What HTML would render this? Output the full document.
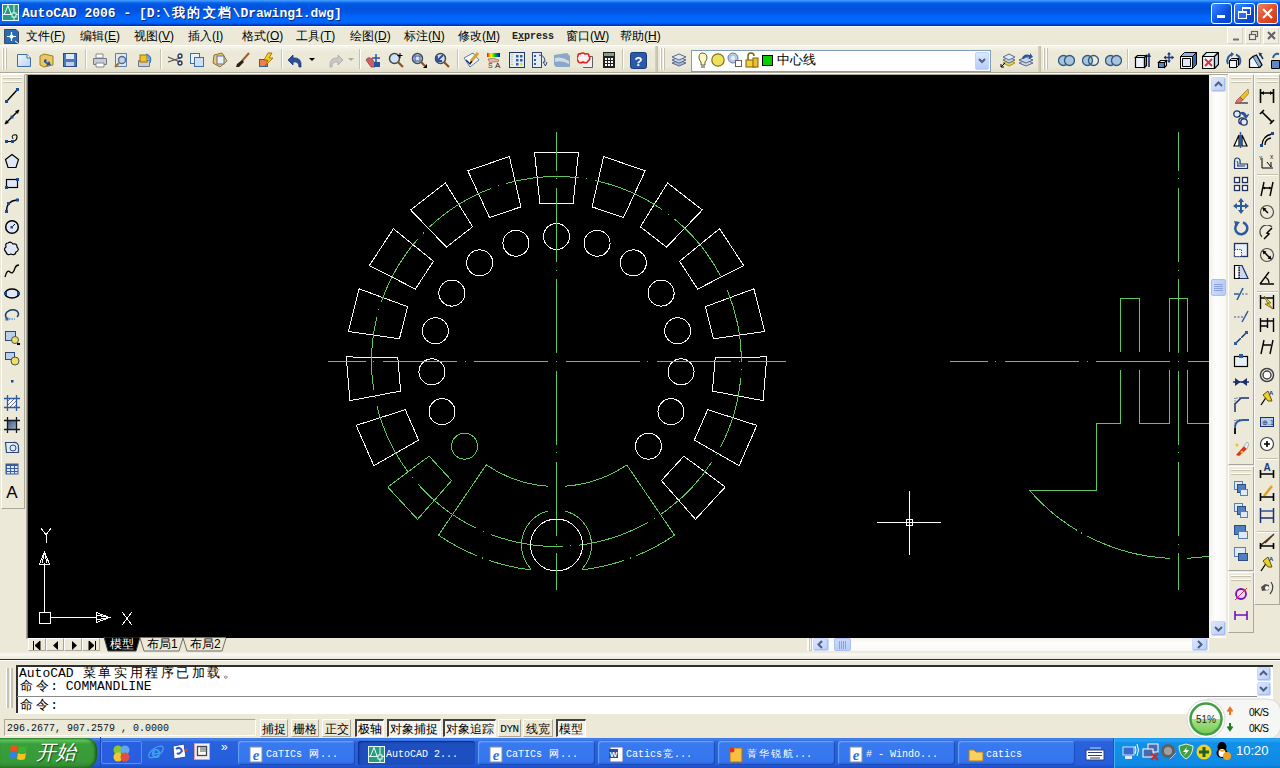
<!DOCTYPE html>
<html><head><meta charset="utf-8">
<style>
*{margin:0;padding:0;box-sizing:border-box}
html,body{width:1280px;height:768px;overflow:hidden;background:#ece9d8;font-family:"Liberation Sans",sans-serif;font-size:12px;color:#000}
.a{position:absolute}
#title{left:0;top:0;width:1280px;height:26px;background:linear-gradient(#3d95ff 0,#3d95ff 1px,#1472f2 2px,#0058e4 4px,#0052dc 9px,#0058e8 13px,#0066fc 17px,#0068ff 22px,#0054e0 24px,#0030b0 25px,#0030b0 26px)}
#ttext{left:22px;top:4px;font:bold 13px "Liberation Mono",monospace;color:#fff;text-shadow:1px 1px 0 #0a2a7a;white-space:pre}
.tb{top:3px;width:21px;height:21px;border:1px solid #fff;border-radius:3px;background:linear-gradient(135deg,#3c8cff,#0a4ee0 60%,#0840c8)}
#menubar{left:0;top:26px;width:1280px;height:20px;background:#ece9d8}
.mi{top:28px;font-size:12px;white-space:pre}
#toolbar{left:0;top:46px;width:1280px;height:28px;background:linear-gradient(#f8f7f0,#ece9d8 5px,#ece9d8 22px,#d8d4c0)}
#draw{left:27px;top:75px;width:1182px;height:563px;background:#000}
.grip{width:3px;border-left:1px solid #fff;border-right:1px solid #aca899}
.sep{width:2px;border-left:1px solid #aca899;border-right:1px solid #fff}
.btn{border:1px solid #fff;border-right-color:#716f64;border-bottom-color:#716f64}
.t{position:absolute;white-space:pre;line-height:14px}
.sb{background:linear-gradient(#e0e8fe,#bcd0f8);border:1px solid #b4c8f6;border-radius:2px}
</style></head><body>
<!-- title bar -->
<div id="title" class="a"></div>
<svg class="a" style="left:2px;top:4px" width="17" height="17"><rect x="0.5" y="0.5" width="16" height="16" fill="#2a9a82" stroke="#e8fff8"/><path d="M2.5 10 L6 1.5 L9 10 M12 1 V16 M1 10.5 H16" stroke="#e8fff8" stroke-width="1" fill="none"/><rect x="10" y="9" width="4" height="4" fill="#2a9a82" stroke="#e8fff8"/></svg>
<div id="ttext" class="a">AutoCAD 2006 - [D:\<span style="display:inline-block;width:15.60px;text-align:center">我</span><span style="display:inline-block;width:15.60px;text-align:center">的</span><span style="display:inline-block;width:15.60px;text-align:center">文</span><span style="display:inline-block;width:15.60px;text-align:center">档</span>\Drawing1.dwg]</div>
<div class="a tb" style="left:1211px"><div class="a" style="left:5px;top:11px;width:8px;height:3px;background:#fff"></div></div>
<div class="a tb" style="left:1234px"><div class="a" style="left:7px;top:3px;width:9px;height:8px;border:1px solid #fff;border-top-width:2px"></div><div class="a" style="left:3px;top:7px;width:9px;height:8px;border:1px solid #fff;border-top-width:2px;background:#2a6ef0"></div></div>
<div class="a tb" style="left:1257px;background:linear-gradient(135deg,#f08060,#e0502a 50%,#c83810)"><svg class="a" style="left:3px;top:3px" width="13" height="13"><path d="M2 2 L11 11 M11 2 L2 11" stroke="#fff" stroke-width="2.2"/></svg></div>
<!-- menu bar -->
<div id="menubar" class="a"></div>
<div class="a" style="left:0;top:26px;width:1280px;height:1px;background:#fff"></div>
<div class="a" style="left:0;top:45px;width:1280px;height:1px;background:#fff"></div>
<div class="a mi" style="left:26px">文件(<u>F</u>)</div>
<div class="a mi" style="left:80px">编辑(<u>E</u>)</div>
<div class="a mi" style="left:134px">视图(<u>V</u>)</div>
<div class="a mi" style="left:188px">插入(<u>I</u>)</div>
<div class="a mi" style="left:242px">格式(<u>O</u>)</div>
<div class="a mi" style="left:296px">工具(<u>T</u>)</div>
<div class="a mi" style="left:350px">绘图(<u>D</u>)</div>
<div class="a mi" style="left:404px">标注(<u>N</u>)</div>
<div class="a mi" style="left:458px">修改(<u>M</u>)</div>
<div class="a mi" style="left:566px">窗口(<u>W</u>)</div>
<div class="a mi" style="left:620px">帮助(<u>H</u>)</div>
<div class="a mi" style="left:512px;top:31px;font-family:'Liberation Mono',monospace;font-size:10px;font-weight:bold;color:#202020">E<u>x</u>press</div>
<!-- toolbar row -->
<div id="draw" class="a"></div>
<svg width="1280" height="768" style="position:absolute;left:0;top:0"><defs><clipPath id="dc"><rect x="27" y="75" width="1182" height="563"/></clipPath></defs><g clip-path="url(#dc)" shape-rendering="crispEdges"><path d="M534.52 152.35 L578.48 152.35 L573.09 203.67 L539.91 203.67 Z" fill="none" stroke="#f8f8f8" stroke-width="1"/><path d="M603.62 156.55 L645.2 170.82 L623.44 217.61 L592.06 206.83 Z" fill="none" stroke="#f8f8f8" stroke-width="1"/><path d="M667.61 182.95 L702.31 209.95 L666.53 247.14 L640.35 226.76 Z" fill="none" stroke="#f8f8f8" stroke-width="1"/><path d="M719.57 228.7 L743.61 265.51 L697.7 289.06 L679.56 261.29 Z" fill="none" stroke="#f8f8f8" stroke-width="1"/><path d="M753.85 288.85 L764.64 331.47 L713.57 338.84 L705.43 306.67 Z" fill="none" stroke="#f8f8f8" stroke-width="1"/><path d="M766.75 356.86 L763.12 400.68 L712.42 391.07 L715.16 358 Z" fill="none" stroke="#f8f8f8" stroke-width="1"/><path d="M756.86 425.38 L739.2 465.64 L694.37 440.09 L707.7 409.71 Z" fill="none" stroke="#f8f8f8" stroke-width="1"/><path d="M725.26 486.98 L695.49 519.32 L661.38 480.6 L683.85 456.19 Z" fill="none" stroke="#f8f8f8" stroke-width="1"/><path d="M417.51 519.32 L387.74 486.98 L429.15 456.19 L451.62 480.6 Z" fill="none" stroke="#5ec85e" stroke-width="1"/><path d="M373.8 465.64 L356.14 425.38 L405.3 409.71 L418.63 440.09 Z" fill="none" stroke="#f8f8f8" stroke-width="1"/><path d="M349.88 400.68 L346.25 356.86 L397.84 358 L400.58 391.07 Z" fill="none" stroke="#f8f8f8" stroke-width="1"/><path d="M348.36 331.47 L359.15 288.85 L407.57 306.67 L399.43 338.84 Z" fill="none" stroke="#f8f8f8" stroke-width="1"/><path d="M369.39 265.51 L393.43 228.7 L433.44 261.29 L415.3 289.06 Z" fill="none" stroke="#f8f8f8" stroke-width="1"/><path d="M410.69 209.95 L445.39 182.95 L472.65 226.76 L446.47 247.14 Z" fill="none" stroke="#f8f8f8" stroke-width="1"/><path d="M467.8 170.82 L509.38 156.55 L520.94 206.83 L489.56 217.61 Z" fill="none" stroke="#f8f8f8" stroke-width="1"/><circle cx="556.5" cy="236.5" r="13" fill="none" stroke="#f8f8f8" stroke-width="1"/><circle cx="597.09" cy="243.27" r="13" fill="none" stroke="#f8f8f8" stroke-width="1"/><circle cx="633.28" cy="262.86" r="13" fill="none" stroke="#f8f8f8" stroke-width="1"/><circle cx="661.15" cy="293.13" r="13" fill="none" stroke="#f8f8f8" stroke-width="1"/><circle cx="677.68" cy="330.81" r="13" fill="none" stroke="#f8f8f8" stroke-width="1"/><circle cx="681.07" cy="371.82" r="13" fill="none" stroke="#f8f8f8" stroke-width="1"/><circle cx="670.97" cy="411.71" r="13" fill="none" stroke="#f8f8f8" stroke-width="1"/><circle cx="648.47" cy="446.16" r="13" fill="none" stroke="#f8f8f8" stroke-width="1"/><circle cx="464.53" cy="446.16" r="13" fill="none" stroke="#5ec85e" stroke-width="1"/><circle cx="442.03" cy="411.71" r="13" fill="none" stroke="#f8f8f8" stroke-width="1"/><circle cx="431.93" cy="371.82" r="13" fill="none" stroke="#f8f8f8" stroke-width="1"/><circle cx="435.32" cy="330.81" r="13" fill="none" stroke="#f8f8f8" stroke-width="1"/><circle cx="451.85" cy="293.13" r="13" fill="none" stroke="#f8f8f8" stroke-width="1"/><circle cx="479.72" cy="262.86" r="13" fill="none" stroke="#f8f8f8" stroke-width="1"/><circle cx="515.91" cy="243.27" r="13" fill="none" stroke="#f8f8f8" stroke-width="1"/><circle cx="556.5" cy="361.5" r="185" fill="none" stroke="#5ec85e" stroke-width="1" stroke-dasharray="73.21 7.5 1.2 7.5" stroke-dashoffset="73.34"/><path d="M328 361.5 H365.6 M382.9 361.5 H456.9 M373 361.5 H374 M474.2 361.5 H548.2 M465 361.5 H466 M565.5 361.5 H639.5 M556 361.5 H557 M656.8 361.5 H730.8 M647 361.5 H648 M748.1 361.5 H786 M739 361.5 H740" stroke="#5ec85e" stroke-width="1" fill="none"/><path d="M556.5 132 V170.6 M556.5 187.9 V261.9 M556.5 178 V179 M556.5 279.2 V353.2 M556.5 270 V271 M556.5 370.5 V444.5 M556.5 361 V362 M556.5 461.8 V535.8 M556.5 452 V453 M556.5 553.1 V590 M556.5 544 V545" stroke="#5ec85e" stroke-width="1" fill="none"/><path d="M486.24 464.89 L438.46 535.19 M626.76 464.89 L674.54 535.19" stroke="#5ec85e" stroke-width="1" fill="none"/><path d="M486.24 464.89 A125 125 0 0 0 547.56 486.18 M565.44 486.18 A125 125 0 0 0 626.76 464.89" stroke="#5ec85e" stroke-width="1" fill="none"/><path d="M438.46 535.19 A210 210 0 0 0 476.48 555.65 M481.59 557.68 A210 210 0 0 0 483.3 558.33 M488.82 560.3 A210 210 0 0 0 530.54 569.89 M674.54 535.19 A210 210 0 0 1 636.52 555.65 M631.41 557.68 A210 210 0 0 1 629.7 558.33 M624.18 560.3 A210 210 0 0 1 582.46 569.89" stroke="#5ec85e" stroke-width="1" fill="none"/><circle cx="556.5" cy="545" r="26" fill="none" stroke="#f8f8f8" stroke-width="1"/><path d="M547.5 511.18 A35 35 0 0 0 531.07 569.05 M565.5 511.18 A35 35 0 0 1 581.93 569.05" stroke="#5ec85e" stroke-width="1" fill="none"/><path d="M950 361.5 H987.6 M1004.9 361.5 H1078.9 M995 361.5 H996 M1096.2 361.5 H1170.2 M1087 361.5 H1088 M1187.5 361.5 H1209 M1178 361.5 H1179" stroke="#5ec85e" stroke-width="1" fill="none"/><path d="M1178.5 132 V170.6 M1178.5 187.9 V261.9 M1178.5 178 V179 M1178.5 279.2 V353.2 M1178.5 270 V271 M1178.5 370.5 V444.5 M1178.5 361 V362 M1178.5 461.8 V535.8 M1178.5 452 V453 M1178.5 553.1 V590 M1178.5 544 V545" stroke="#5ec85e" stroke-width="1" fill="none"/><path d="M1120.5 352 V298.5 H1139.5 V352 M1120.5 370 V423.5 H1096.5 V490.5 H1029.5 M1139.5 370 V423.5 H1169.5 V370 M1169.5 352 V298.5 H1187.5 V352 M1187.5 370 V423.5 H1209" stroke="#5ec85e" stroke-width="1" fill="none"/><path d="M1029.56 490.45 A197 197 0 0 0 1077.04 530.36 M1081.19 532.79 A197 197 0 0 0 1082.39 533.47 M1087.23 536.08 A197 197 0 0 0 1169.56 558.3 M1177.81 558.5 A197 197 0 0 0 1179.19 558.5 M1187.44 558.3 A197 197 0 0 0 1212.71 555.51" stroke="#5ec85e" stroke-width="1" fill="none"/><path d="M877 522.5 H941 M909.5 491 V555" stroke="#fff" stroke-width="1"/><rect x="906.5" y="519.5" width="6" height="6" fill="none" stroke="#fff" stroke-width="1"/><path d="M44.5 612 V563 M50.5 617.5 H96" stroke="#fff" stroke-width="1" fill="none"/><rect x="39.5" y="612.5" width="11" height="11" fill="none" stroke="#fff" stroke-width="1"/><path d="M44.5 552 L39.5 564 H49.5 Z M42 563 L44.5 553 L47 563" stroke="#fff" stroke-width="1" fill="none"/><path d="M96.5 612.5 L109.5 617.5 L96.5 622.5 Z M97 615 L108 617.5 L97 620" stroke="#fff" stroke-width="1" fill="none"/><path d="M41 528 L46 535 L51 528 M46 535 V543" stroke="#fff" stroke-width="1" fill="none"/><path d="M122 612 L132 625 M132 612 L122 625" stroke="#fff" stroke-width="1" fill="none"/></g></svg>
<svg class="a" style="left:3px;top:28px" width="17" height="17" viewBox="0 0 17 17"><path d="M1.5 1.5 H13 L15.5 4 V15.5 H1.5 Z" fill="#2a6ab0" stroke="#3a4a60"/><path d="M4 8.5 H13 M8.5 4 V13" stroke="#fff" stroke-width="1.2"/><circle cx="8.5" cy="8.5" r="2" fill="#fff"/><path d="M12 13 L15.5 15.5" stroke="#fff"/></svg>
<div class="a" style="left:1227px;top:27px;width:16px;height:17px;border:1px solid #fff;border-right-color:#d8d4c4;border-bottom-color:#d8d4c4;background:#efede2"></div>
<div class="a" style="left:1245px;top:27px;width:16px;height:17px;border:1px solid #fff;border-right-color:#d8d4c4;border-bottom-color:#d8d4c4;background:#efede2"></div>
<div class="a" style="left:1263px;top:27px;width:16px;height:17px;border:1px solid #fff;border-right-color:#d8d4c4;border-bottom-color:#d8d4c4;background:#efede2"></div>
<svg class="a" style="left:1230px;top:30px" width="11" height="11" viewBox="0 0 11 11"><path d="M3 9.5 H9" stroke="#707070" stroke-width="2"/></svg>
<svg class="a" style="left:1248px;top:30px" width="11" height="11" viewBox="0 0 11 11"><rect x="3.5" y="1.5" width="6" height="5" fill="none" stroke="#606060" stroke-width="1.2"/><rect x="1.5" y="4.5" width="6" height="5" fill="#efede2" stroke="#606060" stroke-width="1.2"/></svg>
<svg class="a" style="left:1266px;top:30px" width="11" height="11" viewBox="0 0 11 11"><path d="M2 2 L9 9 M9 2 L2 9" stroke="#606060" stroke-width="2"/></svg>
<div class="a" style="left:0px;top:46px;width:1280px;height:26px;background:linear-gradient(#f6f5ef,#ece9d8 6px,#ece9d8 20px,#e2dfcc)"></div>
<div class="a" style="left:0px;top:72px;width:1280px;height:1px;background:#aca899"></div>
<div class="a" style="left:0px;top:73px;width:1280px;height:1px;background:#fff"></div>
<div class="a" style="left:2px;top:48px;width:2px;height:22px;border-left:1px solid #fff;background:#c5c2b2"></div>
<div class="a" style="left:5px;top:48px;width:2px;height:22px;border-left:1px solid #fff;background:#c5c2b2"></div>
<div class="a" style="left:85px;top:49px;width:1px;height:20px;background:#c5c2b2"></div>
<div class="a" style="left:86px;top:49px;width:1px;height:20px;background:#fff"></div>
<div class="a" style="left:160px;top:49px;width:1px;height:20px;background:#c5c2b2"></div>
<div class="a" style="left:161px;top:49px;width:1px;height:20px;background:#fff"></div>
<div class="a" style="left:281px;top:49px;width:1px;height:20px;background:#c5c2b2"></div>
<div class="a" style="left:282px;top:49px;width:1px;height:20px;background:#fff"></div>
<div class="a" style="left:359px;top:49px;width:1px;height:20px;background:#c5c2b2"></div>
<div class="a" style="left:360px;top:49px;width:1px;height:20px;background:#fff"></div>
<div class="a" style="left:457px;top:49px;width:1px;height:20px;background:#c5c2b2"></div>
<div class="a" style="left:458px;top:49px;width:1px;height:20px;background:#fff"></div>
<div class="a" style="left:622px;top:49px;width:1px;height:20px;background:#c5c2b2"></div>
<div class="a" style="left:623px;top:49px;width:1px;height:20px;background:#fff"></div>
<div class="a" style="left:655px;top:46px;width:3px;height:26px;background:linear-gradient(90deg,#d8d4c0,#c0bca8)"></div>
<div class="a" style="left:660px;top:48px;width:2px;height:22px;border-left:1px solid #fff;background:#c5c2b2"></div>
<div class="a" style="left:663px;top:48px;width:2px;height:22px;border-left:1px solid #fff;background:#c5c2b2"></div>
<div class="a" style="left:1038px;top:46px;width:3px;height:26px;background:linear-gradient(90deg,#d8d4c0,#c0bca8)"></div>
<div class="a" style="left:1043px;top:48px;width:2px;height:22px;border-left:1px solid #fff;background:#c5c2b2"></div>
<div class="a" style="left:1046px;top:48px;width:2px;height:22px;border-left:1px solid #fff;background:#c5c2b2"></div>
<div class="a" style="left:1127px;top:49px;width:1px;height:20px;background:#c5c2b2"></div>
<div class="a" style="left:1128px;top:49px;width:1px;height:20px;background:#fff"></div>
<div class="a" style="left:691px;top:50px;width:300px;height:22px;background:#fff;border:1px solid #7f9db9"></div>
<div class="a" style="left:975px;top:52px;width:14px;height:18px;background:linear-gradient(#dde8fe,#b6cbf7);border:1px solid #c1d3fb;border-radius:2px"></div>
<svg class="a" style="left:977px;top:56px" width="10" height="10" viewBox="0 0 10 10"><path d="M2 3 L5 6 L8 3" stroke="#4d6185" stroke-width="2" fill="none"/></svg>
<div class="a t" style="left:777px;top:53px;font-size:13px">中心线</div>
<svg width="0" height="0" style="position:absolute"><defs><linearGradient id="gpage" x1="0" y1="0" x2="1" y2="1"><stop offset="0" stop-color="#f4f8fe"/><stop offset="1" stop-color="#b8d0ec"/></linearGradient><linearGradient id="grain" x1="0" x2="1"><stop offset="0" stop-color="#f00"/><stop offset=".3" stop-color="#ff0"/><stop offset=".6" stop-color="#0c0"/><stop offset="1" stop-color="#00f"/></linearGradient></defs></svg>
<svg class="a" style="left:16px;top:52px" width="17" height="17" viewBox="0 0 17 17"><path d="M1.5 2.5 H11 L14.5 6 V14.5 H1.5 Z" fill="url(#gpage)" stroke="#3d6ea8"/><path d="M11 2.5 V6 H14.5" fill="#fff" stroke="#3d6ea8"/></svg>
<svg class="a" style="left:39px;top:52px" width="17" height="17" viewBox="0 0 17 17"><path d="M1 4 L5 2 L14 4 V13 L5 15 L1 13 Z" fill="#e8c860" stroke="#a08020"/><path d="M6 7 Q3 10 8 12 L7 14 L12 13 L10 9 L9 10.5 Q6 10 8 8" fill="#2850a0"/></svg>
<svg class="a" style="left:62px;top:52px" width="17" height="17" viewBox="0 0 17 17"><rect x="1.5" y="1.5" width="13" height="13" fill="#4a78c0" stroke="#2a4a88"/><rect x="4" y="2" width="8" height="5" fill="#dfe8f8"/><rect x="4" y="10" width="8" height="4" fill="#c0d0e8"/></svg>
<svg class="a" style="left:92px;top:52px" width="17" height="17" viewBox="0 0 17 17"><path d="M4 2 H11 V6 H4 Z" fill="#fff" stroke="#888"/><path d="M1.5 6.5 H14.5 V12.5 H1.5 Z" fill="#c8ccd8" stroke="#707888"/><path d="M4 11 H12 V15 H4 Z" fill="#fff" stroke="#888"/></svg>
<svg class="a" style="left:114px;top:52px" width="17" height="17" viewBox="0 0 17 17"><path d="M1.5 1.5 H12.5 V14.5 H1.5 Z" fill="#dfeaf8" stroke="#5a7eb0"/><circle cx="8" cy="8" r="3.5" fill="#bcd6f0" stroke="#606878" stroke-width="1.3"/><path d="M5 11 L1 15" stroke="#a07030" stroke-width="2"/></svg>
<svg class="a" style="left:137px;top:52px" width="17" height="17" viewBox="0 0 17 17"><path d="M1.5 8.5 H12.5 V14.5 H1.5 Z" fill="#c8ccd8" stroke="#707888"/><rect x="3" y="3" width="7" height="7" fill="#f0c030" stroke="#a07000"/><path d="M9 2 Q16 4 13 11" fill="#5aa0e0" stroke="#3070b0"/></svg>
<svg class="a" style="left:167px;top:52px" width="17" height="17" viewBox="0 0 17 17"><path d="M1 5 L13 10 M1 10 L13 6" stroke="#555" stroke-width="1.3"/><circle cx="13" cy="4" r="2" fill="none" stroke="#203060" stroke-width="1.3"/><circle cx="13" cy="11" r="2" fill="none" stroke="#203060" stroke-width="1.3"/></svg>
<svg class="a" style="left:189px;top:52px" width="17" height="17" viewBox="0 0 17 17"><rect x="1.5" y="1.5" width="9" height="10" fill="#eaf2fc" stroke="#3d6ea8"/><rect x="5.5" y="5.5" width="9" height="9" fill="#cfe0f6" stroke="#3d6ea8"/></svg>
<svg class="a" style="left:212px;top:52px" width="17" height="17" viewBox="0 0 17 17"><path d="M2 3 L10 1 L15 9 L8 15 L1 11 Z" fill="#e8c870" stroke="#907030"/><rect x="5" y="4" width="7" height="8" fill="#e8f0fa" stroke="#607090"/></svg>
<svg class="a" style="left:235px;top:52px" width="17" height="17" viewBox="0 0 17 17"><path d="M14 1 L7 9" stroke="#a06030" stroke-width="2"/><path d="M7 8 L9 10 L4 15 L1 15 L2 12 Z" fill="#302010"/></svg>
<svg class="a" style="left:258px;top:52px" width="17" height="17" viewBox="0 0 17 17"><rect x="1.5" y="7.5" width="8" height="7" fill="#f08050" stroke="#3060a0"/><path d="M10 1 L6 8 H10 L7 14 L15 6 H11 L14 1 Z" fill="#f8d020" stroke="#906000" stroke-width="0.8"/></svg>
<svg class="a" style="left:287px;top:52px" width="17" height="17" viewBox="0 0 17 17"><path d="M14 15 Q15 5 6 6 L6 3 L1 8 L6 13 L6 10 Q12 9 12 15 Z" fill="#2a50a0" stroke="#1a3070" stroke-width="0.8"/></svg>
<svg class="a" style="left:328px;top:52px" width="17" height="17" viewBox="0 0 17 17"><path d="M2 15 Q1 5 10 6 L10 3 L15 8 L10 13 L10 10 Q4 9 4 15 Z" fill="#c8c8c8" stroke="#a8a8a8" stroke-width="0.8"/></svg>
<svg class="a" style="left:365px;top:52px" width="17" height="17" viewBox="0 0 17 17"><path d="M1 8 Q3 4 7 7 L10 11 L10 15 L6 15 Z" fill="#d06060" stroke="#904040" stroke-width="0.8"/><path d="M11 2 V10 M7 6 H15" stroke="#2a50a0" stroke-width="1.5"/><rect x="9" y="10" width="6" height="5" fill="#2a50a0"/></svg>
<svg class="a" style="left:388px;top:52px" width="17" height="17" viewBox="0 0 17 17"><circle cx="6.5" cy="6.5" r="5" fill="#cfe2f6" stroke="#404850" stroke-width="1.5"/><path d="M10 10 L15 15" stroke="#905020" stroke-width="2.2"/><path d="M12 1 V6 M9.5 3.5 H14.5" stroke="#000" stroke-width="1"/></svg>
<svg class="a" style="left:411px;top:52px" width="17" height="17" viewBox="0 0 17 17"><circle cx="6.5" cy="6.5" r="5" fill="#cfe2f6" stroke="#404850" stroke-width="1.5"/><rect x="4" y="4" width="5" height="5" fill="none" stroke="#2a50a0"/><path d="M10 10 L14 14" stroke="#905020" stroke-width="2.2"/><path d="M16 12 V16 H12 Z" fill="#000"/></svg>
<svg class="a" style="left:434px;top:52px" width="17" height="17" viewBox="0 0 17 17"><circle cx="6.5" cy="6.5" r="5" fill="#cfe2f6" stroke="#404850" stroke-width="1.5"/><path d="M10 10 L15 15" stroke="#905020" stroke-width="2.2"/><path d="M3 9 L9 3 M3 4 V9 H8" stroke="#2a50a0" stroke-width="1.8" fill="none"/></svg>
<svg class="a" style="left:463px;top:52px" width="17" height="17" viewBox="0 0 17 17"><path d="M1 6 L7 15 L16 8 L10 1 Z" fill="#f4f8fc" stroke="#5a7eb0"/><path d="M3 8 L7 12 L11 6" stroke="#203060" stroke-width="1.4" fill="none"/><path d="M15 1 L8 9" stroke="#e0a020" stroke-width="2.8"/><path d="M8 9 L6.5 11.5 L9.5 10 Z" fill="#000"/></svg>
<svg class="a" style="left:486px;top:52px" width="17" height="17" viewBox="0 0 17 17"><rect x="1" y="1" width="13" height="4" fill="url(#grain)"/><path d="M2 7 Q7 5 13 8 L12 10 Q7 9 4 11 Z" fill="#f0b0a0" stroke="#806050" stroke-width="0.6"/><text x="2" y="16" font-size="7" font-family="Liberation Sans" fill="#404040">S</text><text x="9" y="16" font-size="8" font-family="Liberation Sans" fill="#202020">A</text></svg>
<svg class="a" style="left:509px;top:52px" width="17" height="17" viewBox="0 0 17 17"><rect x="0.5" y="0.5" width="15" height="15" fill="#e4ecf8" stroke="#203868"/><g fill="#3a5c98"><rect x="7" y="3" width="2.5" height="2.5"/><rect x="11" y="3" width="2.5" height="2.5"/><rect x="7" y="7" width="2.5" height="2.5"/><rect x="11" y="7" width="2.5" height="2.5"/><rect x="7" y="11" width="2.5" height="2.5"/></g><rect x="11" y="11" width="2.5" height="2.5" fill="#e0e040"/><path d="M3 2 V14" stroke="#a0a020" stroke-dasharray="1 1.5"/></svg>
<svg class="a" style="left:531px;top:52px" width="17" height="17" viewBox="0 0 17 17"><rect x="1.5" y="0.5" width="9" height="15" fill="#e4ecf8" stroke="#304878"/><g fill="#3a5c98"><rect x="3" y="3" width="2" height="2"/><rect x="3" y="7" width="2" height="2"/><rect x="3" y="11" width="2" height="2"/></g><path d="M8 3 Q14 3 14 10 L12 10 L14.5 14 L16 10" fill="none" stroke="#304878"/></svg>
<svg class="a" style="left:554px;top:52px" width="17" height="17" viewBox="0 0 17 17"><path d="M0 3 L13 1 L16 4 V15 L2 15 L0 13 Z" fill="#8aa8c8"/><path d="M1 6 Q8 4 15 9 L15 12 Q8 8 1 10 Z" fill="#d0dce8"/></svg>
<svg class="a" style="left:577px;top:52px" width="17" height="17" viewBox="0 0 17 17"><path d="M6 4.5 H15.5 V15.5 H6" fill="#f0f0f0" stroke="#606060"/><path d="M3 2 Q6 0 8 2 Q12 1 12 4 Q14 7 11 9 Q10 12 6 10 Q2 12 1 9 Q-1 6 1 4 Q1 1 3 2 Z" fill="#fff0f0" stroke="#e02020" stroke-width="1.6"/></svg>
<svg class="a" style="left:601px;top:52px" width="17" height="17" viewBox="0 0 17 17"><rect x="2" y="0" width="12" height="16" fill="#202020"/><rect x="3" y="1" width="10" height="3" fill="#80a080"/><g fill="#fff"><rect x="4" y="6" width="2" height="2"/><rect x="7" y="6" width="2" height="2"/><rect x="10" y="6" width="2" height="2"/><rect x="4" y="9" width="2" height="2"/><rect x="7" y="9" width="2" height="2"/><rect x="10" y="9" width="2" height="2"/><rect x="4" y="12" width="2" height="2"/><rect x="7" y="12" width="2" height="2"/><rect x="10" y="12" width="2" height="2"/></g></svg>
<svg class="a" style="left:630px;top:52px" width="17" height="17" viewBox="0 0 17 17"><rect x="0.5" y="0.5" width="16" height="16" rx="2" fill="#2a5aa8" stroke="#1a3a78"/><text x="8.5" y="13.5" font-family="Liberation Sans" font-weight="bold" font-size="13" fill="#fff" text-anchor="middle">?</text></svg>
<svg class="a" style="left:671px;top:52px" width="17" height="17" viewBox="0 0 17 17"><path d="M1 11 L8 14 L15 11 L8 8 Z" fill="#a8b8d0" stroke="#5a6a88"/><path d="M1 8 L8 11 L15 8 L8 5 Z" fill="#c8d4e8" stroke="#5a6a88"/><path d="M1 5 L8 8 L15 5 L8 2 Z" fill="#e0e8f4" stroke="#5a6a88"/></svg>
<svg class="a" style="left:1000px;top:52px" width="17" height="17" viewBox="0 0 17 17"><path d="M3 11 L9 14 L15 11 L9 8 Z" fill="#f0d040" stroke="#a09020"/><path d="M3 8 L9 11 L15 8 L9 5 Z" fill="#c8d4e8" stroke="#5a6a88"/><path d="M3 5 L9 8 L15 5 L9 2 Z" fill="#e0e8f4" stroke="#5a6a88"/><path d="M1 15 L5 11 M1 12 V15 H4" stroke="#000" fill="none"/></svg>
<svg class="a" style="left:1018px;top:52px" width="17" height="17" viewBox="0 0 17 17"><path d="M1 11 L8 14 L15 11 L8 8 Z" fill="#c8d4e8" stroke="#5a6a88"/><path d="M1 8 L8 11 L15 8 L8 5 Z" fill="#c8d4e8" stroke="#5a6a88"/><path d="M4 6 Q6 1 12 3 L12 1 L15 5 L11 7 L11 5 Q7 4 6 7 Z" fill="#2a50a0"/></svg>
<svg class="a" style="left:1058px;top:52px" width="17" height="17" viewBox="0 0 17 17"><circle cx="5.5" cy="8.5" r="5" fill="#a8c4dc" stroke="#305880" stroke-width="1.3"/><circle cx="11.5" cy="8.5" r="5" fill="#a8c4dc" stroke="#305880" stroke-width="1.3"/></svg>
<svg class="a" style="left:1082px;top:52px" width="17" height="17" viewBox="0 0 17 17"><circle cx="5.5" cy="8.5" r="5" fill="#a8c4dc" stroke="#305880" stroke-width="1.3"/><circle cx="11.5" cy="8.5" r="5" fill="none" stroke="#305880" stroke-width="1.3"/></svg>
<svg class="a" style="left:1105px;top:52px" width="17" height="17" viewBox="0 0 17 17"><circle cx="5.5" cy="8.5" r="5" fill="#a8c4dc" stroke="#305880" stroke-width="1.3"/><circle cx="11.5" cy="8.5" r="5" fill="#a8c4dc" stroke="#305880" stroke-width="1.3"/></svg>
<svg class="a" style="left:1134px;top:52px" width="17" height="17" viewBox="0 0 17 17"><path d="M1.5 5.5 H10.5 V15.5 H1.5 Z" fill="#eef4fc" stroke="#000" stroke-width="1.2"/><path d="M1.5 5.5 L3.5 3.5 H12.5 L10.5 5.5 Z" fill="#c8d8ec" stroke="#000" stroke-width="1.2"/><path d="M10.5 5.5 L12.5 3.5 V13.5 L10.5 15.5 Z" fill="#8aa8d0" stroke="#000" stroke-width="1.2"/><path d="M15 15 V3" stroke="#1a3070" stroke-width="1.6"/><path d="M12.5 5 L15 0.5 L17 5 Z" fill="#1a3070"/></svg>
<svg class="a" style="left:1157px;top:52px" width="17" height="17" viewBox="0 0 17 17"><path d="M1.5 10.5 H7.5 V15.5 H1.5 Z" fill="#5a88c8" stroke="#000" stroke-width="1.1"/><path d="M1.5 10.5 L3.5 8.5 H9.5 L7.5 10.5 Z M7.5 10.5 L9.5 8.5 V13.5 L7.5 15.5 Z" fill="#eef4fc" stroke="#000" stroke-width="1.1"/><path d="M12 1 V10 M7.5 5.5 H16.5" stroke="#1a3a80" stroke-width="1.4"/><path d="M12 0 L10 2.5 H14 Z M12 11 L10 8.5 H14 Z M6.5 5.5 L9 3.5 V7.5 Z M17 5.5 L14.5 3.5 V7.5 Z" fill="#1a3a80"/></svg>
<svg class="a" style="left:1180px;top:52px" width="17" height="17" viewBox="0 0 17 17"><path d="M0.5 4.5 H12.5 V16.5 H0.5 Z" fill="#fff" stroke="#000"/><path d="M2.5 6.5 H10.5 V14.5 H2.5 Z" fill="#dfeaf8" stroke="#000"/><path d="M0.5 4.5 L4.5 0.5 H16.5 L12.5 4.5 Z" fill="#8ab4e4" stroke="#000"/><path d="M12.5 4.5 L16.5 0.5 V12.5 L12.5 16.5 Z" fill="#2a68b8" stroke="#000"/></svg>
<svg class="a" style="left:1202px;top:52px" width="17" height="17" viewBox="0 0 17 17"><path d="M0.5 4.5 H12.5 V16.5 H0.5 Z" fill="#eef4fc" stroke="#000" stroke-width="1.2"/><path d="M0.5 4.5 L4.5 0.5 H16.5 L12.5 4.5 Z" fill="#dfeaf8" stroke="#000" stroke-width="1.2"/><path d="M12.5 4.5 L16.5 0.5 V12.5 L12.5 16.5 Z" fill="#c0d4ec" stroke="#000" stroke-width="1.2"/><path d="M3 7 L10 14 M10 7 L3 14" stroke="#e03030" stroke-width="2"/></svg>
<svg class="a" style="left:1225px;top:52px" width="17" height="17" viewBox="0 0 17 17"><path d="M3 12 A7 7 0 0 1 8 2" fill="none" stroke="#2a5aa0" stroke-width="2"/><path d="M11 2.5 A7 7 0 0 1 14 13" fill="none" stroke="#2a5aa0" stroke-width="2"/><path d="M6 0 L9 2 L6 5 Z" fill="#2a5aa0"/><path d="M4.5 8.5 H11.5 V15.5 H4.5 Z" fill="#eef4fc" stroke="#000"/><path d="M4.5 8.5 L6.5 6.5 H13.5 L11.5 8.5 Z M11.5 8.5 L13.5 6.5 V13.5 L11.5 15.5 Z" fill="#c0d4ec" stroke="#000"/></svg>
<svg class="a" style="left:1248px;top:52px" width="17" height="17" viewBox="0 0 17 17"><path d="M1.5 15.5 V7.5 L5 4.5 L11.5 15.5 Z" fill="#eef4fc" stroke="#000" stroke-width="1.2"/><path d="M5 4.5 L8.5 3 L14 13 L11.5 15.5" fill="#8ab4e4" stroke="#000" stroke-width="1.2"/><path d="M15 7 L12 2" stroke="#1a3070" stroke-width="1.5"/><path d="M10.5 0.5 L14.5 1.5 L11.5 4 Z" fill="#1a3070"/></svg>
<svg class="a" style="left:1271px;top:52px" width="17" height="17" viewBox="0 0 17 17"><path d="M2 6 Q3 1 8 2" fill="none" stroke="#2a5aa0" stroke-width="2"/><path d="M0.5 8.5 H8.5 V16.5 H0.5 Z" fill="#5a88c8" stroke="#000"/><path d="M8.5 8.5 L10.5 6.5 V14.5" fill="#5a88c8" stroke="#000"/></svg>
<svg class="a" style="left:309px;top:58px" width="6" height="4" viewBox="0 0 6 4"><path d="M0 0 H6 L3 3 Z" fill="#000"/></svg>
<svg class="a" style="left:348px;top:58px" width="6" height="4" viewBox="0 0 6 4"><path d="M0 0 H6 L3 3 Z" fill="#aaa"/></svg>
<svg class="a" style="left:697px;top:52px" width="12" height="16" viewBox="0 0 12 16"><path d="M5 1 Q10 1 10 6 Q10 8 8 10 V13 H4 V10 Q2 8 2 6 Q2 1 5 1 Z" fill="#fff8c0" stroke="#606040"/><rect x="4" y="13" width="4" height="3" fill="#a0a0a0"/></svg>
<svg class="a" style="left:711px;top:52px" width="14" height="16" viewBox="0 0 14 16"><circle cx="7" cy="8" r="6.2" fill="#f0e060" stroke="#807020" stroke-width="1.2"/></svg>
<svg class="a" style="left:727px;top:52px" width="15" height="16" viewBox="0 0 15 16"><circle cx="6" cy="6" r="5" fill="#b8c8e0" stroke="#6880a0"/><circle cx="6" cy="6" r="2" fill="#e8f0f8"/><rect x="8.5" y="8.5" width="6" height="6" fill="#fff" stroke="#606060"/></svg>
<svg class="a" style="left:745px;top:52px" width="14" height="16" viewBox="0 0 14 16"><path d="M3 8 V4 Q3 1 6 1 Q9 1 9 4" fill="none" stroke="#806000" stroke-width="1.5"/><rect x="1" y="8" width="9" height="7" fill="#f0d040" stroke="#806000"/><rect x="8" y="6" width="5" height="9" fill="#e8c030" stroke="#806000"/></svg>
<svg class="a" style="left:762px;top:55px" width="11" height="11" viewBox="0 0 11 11"><rect x="0.5" y="0.5" width="10" height="10" fill="#00d000" stroke="#000"/></svg>
<div class="a" style="left:1px;top:74px;width:24px;height:435px;border:1px solid #fff;border-right-color:#aca899;border-bottom-color:#aca899;background:#ece9d8"></div>
<div class="a" style="left:3px;top:77px;width:19px;height:2px;border-top:1px solid #fff;background:#c5c2b2"></div>
<div class="a" style="left:3px;top:81px;width:19px;height:2px;border-top:1px solid #fff;background:#c5c2b2"></div>
<svg width="0" height="0" style="position:absolute"><defs><linearGradient id="gradg" x1="0" y1="0" x2="1" y2="1"><stop offset="0" stop-color="#405070"/><stop offset="1" stop-color="#a0b8d8"/></linearGradient></defs></svg>
<svg class="a" style="left:4px;top:87px" width="16" height="16" viewBox="0 0 16 16"><path d="M2.5 14.5 L13.5 2.5" stroke="#000" stroke-width="1.4"/><rect x="1" y="13" width="3" height="3" fill="#1a4a90"/><rect x="12" y="1" width="3" height="3" fill="#1a4a90"/></svg>
<svg class="a" style="left:4px;top:109px" width="16" height="16" viewBox="0 0 16 16"><path d="M1 15 L15 1" stroke="#000" stroke-width="1.4"/><path d="M1 15 L2 11 L5 14 Z M15 1 L14 5 L11 2 Z" fill="#000"/><rect x="6.5" y="6.5" width="3" height="3" fill="#1a4a90"/></svg>
<svg class="a" style="left:4px;top:131px" width="16" height="16" viewBox="0 0 16 16"><path d="M2 10.5 H8 Q13 10 13 6 Q13 3 10 4" stroke="#000" stroke-width="1.2" fill="none"/><path d="M10 4 Q7 4 9 8" stroke="#000" fill="none"/><rect x="1" y="9" width="3" height="3" fill="#1a4a90"/><rect x="7" y="9" width="3" height="3" fill="#1a4a90"/></svg>
<svg class="a" style="left:4px;top:153px" width="16" height="16" viewBox="0 0 16 16"><path d="M8 1.5 L14.5 6.5 L12 14.5 H4 L1.5 6.5 Z" fill="#e0e8f8" stroke="#000" stroke-width="1.2"/></svg>
<svg class="a" style="left:4px;top:175px" width="16" height="16" viewBox="0 0 16 16"><rect x="2.5" y="4.5" width="11" height="8" fill="#e0e8f8" stroke="#000" stroke-width="1.2"/><rect x="1" y="11" width="3" height="3" fill="#1a4a90"/><rect x="12" y="3" width="3" height="3" fill="#1a4a90"/></svg>
<svg class="a" style="left:4px;top:197px" width="16" height="16" viewBox="0 0 16 16"><path d="M2.5 14 Q2.5 4 13 3" stroke="#000" stroke-width="1.3" fill="none"/><rect x="1" y="13" width="3" height="3" fill="#1a4a90"/><rect x="12" y="1.5" width="3" height="3" fill="#1a4a90"/><rect x="3" y="5" width="3" height="3" fill="#1a4a90"/></svg>
<svg class="a" style="left:4px;top:219px" width="16" height="16" viewBox="0 0 16 16"><circle cx="8" cy="8" r="6.3" fill="#e0e8f8" stroke="#000" stroke-width="1.5"/><path d="M8 8 L11 5" stroke="#000"/><rect x="6.5" y="7" width="2.5" height="2.5" fill="#1a4a90"/></svg>
<svg class="a" style="left:4px;top:241px" width="16" height="16" viewBox="0 0 16 16"><path d="M4 2 Q7 0 9 3 Q13 2 13 6 Q16 9 12 11 Q11 15 7 13 Q3 15 2 11 Q-1 8 2 6 Q1 2 4 2 Z" fill="#e0e8f8" stroke="#000" stroke-width="1.2"/></svg>
<svg class="a" style="left:4px;top:263px" width="16" height="16" viewBox="0 0 16 16"><path d="M1 14 Q3 6 6 9 Q9 12 11 5 Q12 2 15 2" stroke="#000" stroke-width="1.3" fill="none"/></svg>
<svg class="a" style="left:4px;top:285px" width="16" height="16" viewBox="0 0 16 16"><ellipse cx="8" cy="8.5" rx="7" ry="4.5" fill="#e0e8f8" stroke="#000" stroke-width="1.5"/><rect x="0" y="7" width="3" height="3" fill="#1a4a90"/><rect x="13" y="7" width="3" height="3" fill="#1a4a90"/></svg>
<svg class="a" style="left:4px;top:307px" width="16" height="16" viewBox="0 0 16 16"><path d="M3 12 Q0 8 3 5 Q8 1 13 4 Q16 7 13 10" stroke="#1a3a70" stroke-width="1.5" fill="none"/><rect x="1.5" y="10.5" width="3" height="3" fill="#2a6ab0"/><path d="M5 12 H11" stroke="#2a6ab0" stroke-dasharray="1.5 1"/></svg>
<svg class="a" style="left:4px;top:329px" width="16" height="16" viewBox="0 0 16 16"><rect x="1.5" y="2.5" width="10" height="9" fill="#b8d0ec" stroke="#304878"/><circle cx="11" cy="11" r="3.5" fill="#f0e060" stroke="#505050"/><path d="M13 14 H16 V16 H13 Z" fill="#000"/></svg>
<svg class="a" style="left:4px;top:351px" width="16" height="16" viewBox="0 0 16 16"><rect x="1.5" y="1.5" width="9" height="7" fill="#b8d0ec" stroke="#304878"/><circle cx="11" cy="10" r="4" fill="#f0e060" stroke="#505050"/></svg>
<svg class="a" style="left:4px;top:373px" width="16" height="16" viewBox="0 0 16 16"><rect x="7" y="7" width="2.5" height="2.5" fill="#1a4a90"/></svg>
<svg class="a" style="left:4px;top:395px" width="16" height="16" viewBox="0 0 16 16"><rect x="3" y="3" width="10" height="10" fill="#fff"/><path d="M3 7 L7 3 M3 11 L11 3 M5 13 L13 5 M9 13 L13 9" stroke="#607090" stroke-width="1"/><path d="M0 3.5 H16 M0 12.5 H16 M3.5 0 V16 M12.5 0 V16" stroke="#2a5aa0" stroke-width="1.3"/></svg>
<svg class="a" style="left:4px;top:417px" width="16" height="16" viewBox="0 0 16 16"><rect x="3" y="3" width="10" height="10" fill="url(#gradg)"/><path d="M0 3.5 H16 M0 12.5 H16 M3.5 0 V16 M12.5 0 V16" stroke="#101820" stroke-width="1.3"/></svg>
<svg class="a" style="left:4px;top:439px" width="16" height="16" viewBox="0 0 16 16"><path d="M1.5 3.5 H9 Q15 3 14.5 9 L14.5 13.5 H2.5 Z" fill="#dfeaf8" stroke="#304878" stroke-width="1.2"/><circle cx="9" cy="9" r="3" fill="none" stroke="#304878"/></svg>
<svg class="a" style="left:4px;top:461px" width="16" height="16" viewBox="0 0 16 16"><rect x="1.5" y="2.5" width="13" height="11" fill="#3a5c98"/><g fill="#dfeaf8"><rect x="3" y="5" width="3" height="2"/><rect x="7" y="5" width="3" height="2"/><rect x="11" y="5" width="2.5" height="2"/><rect x="3" y="8" width="3" height="2"/><rect x="7" y="8" width="3" height="2"/><rect x="11" y="8" width="2.5" height="2"/><rect x="3" y="11" width="3" height="1.5"/><rect x="7" y="11" width="3" height="1.5"/><rect x="11" y="11" width="2.5" height="1.5"/></g></svg>
<svg class="a" style="left:4px;top:483px" width="16" height="16" viewBox="0 0 16 16"><text x="8" y="15" font-family="Liberation Sans" font-size="17" fill="#000" text-anchor="middle">A</text></svg>
<div class="a" style="left:25px;top:74px;width:1203px;height:1px;background:#aca899"></div>
<div class="a" style="left:26px;top:75px;width:1px;height:564px;background:#aca899"></div>
<div class="a" style="left:27px;top:75px;width:1px;height:564px;background:#716f64"></div>
<div class="a" style="left:1209px;top:75px;width:17px;height:563px;background:linear-gradient(90deg,#f3f1ec,#fefefe 40%,#f8f8f6)"></div>
<div class="a" style="left:1211px;top:77px;width:15px;height:15px;background:linear-gradient(135deg,#dbe6fe,#b9cef8);border:1px solid #cbdaf9;border-radius:2px;box-shadow:inset -1px -1px 0 #a8bdee"></div>
<svg class="a" style="left:1214px;top:80px" width="9" height="9" viewBox="0 0 9 9"><path d="M1 6 L4.5 2.5 L8 6" stroke="#4d6185" stroke-width="2" fill="none"/></svg>
<div class="a" style="left:1211px;top:621px;width:15px;height:15px;background:linear-gradient(135deg,#dbe6fe,#b9cef8);border:1px solid #cbdaf9;border-radius:2px;box-shadow:inset -1px -1px 0 #a8bdee"></div>
<svg class="a" style="left:1214px;top:624px" width="9" height="9" viewBox="0 0 9 9"><path d="M1 3 L4.5 6.5 L8 3" stroke="#4d6185" stroke-width="2" fill="none"/></svg>
<div class="a" style="left:1211px;top:279px;width:15px;height:17px;background:linear-gradient(90deg,#cad8fa,#b8cdf8);border:1px solid #a9bef5;border-radius:2px"></div>
<svg class="a" style="left:1214px;top:283px" width="9" height="9" viewBox="0 0 9 9"><path d="M0 1.5 H9 M0 3.5 H9 M0 5.5 H9 M0 7.5 H9" stroke="#8aa3e0"/></svg>
<div class="a" style="left:1228px;top:74px;width:26px;height:391px;border:1px solid #fff;border-right-color:#aca899;border-bottom-color:#aca899;background:#ece9d8"></div>
<div class="a" style="left:1231px;top:77px;width:20px;height:2px;border-top:1px solid #fff;background:#c5c2b2"></div>
<div class="a" style="left:1231px;top:81px;width:20px;height:2px;border-top:1px solid #fff;background:#c5c2b2"></div>
<div class="a" style="left:1228px;top:466px;width:26px;height:105px;border:1px solid #fff;border-right-color:#aca899;border-bottom-color:#aca899;background:#ece9d8"></div>
<div class="a" style="left:1231px;top:469px;width:20px;height:2px;border-top:1px solid #fff;background:#c5c2b2"></div>
<div class="a" style="left:1231px;top:473px;width:20px;height:2px;border-top:1px solid #fff;background:#c5c2b2"></div>
<div class="a" style="left:1228px;top:572px;width:26px;height:61px;border:1px solid #fff;border-right-color:#aca899;border-bottom-color:#aca899;background:#ece9d8"></div>
<div class="a" style="left:1231px;top:575px;width:20px;height:2px;border-top:1px solid #fff;background:#c5c2b2"></div>
<div class="a" style="left:1231px;top:579px;width:20px;height:2px;border-top:1px solid #fff;background:#c5c2b2"></div>
<div class="a" style="left:1254px;top:74px;width:26px;height:531px;border:1px solid #fff;border-right-color:#aca899;border-bottom-color:#aca899;background:#ece9d8"></div>
<div class="a" style="left:1257px;top:77px;width:21px;height:2px;border-top:1px solid #fff;background:#c5c2b2"></div>
<div class="a" style="left:1257px;top:81px;width:21px;height:2px;border-top:1px solid #fff;background:#c5c2b2"></div>
<div class="a" style="left:1257px;top:174px;width:21px;height:1px;background:#c5c2b2"></div>
<div class="a" style="left:1257px;top:175px;width:21px;height:1px;background:#fff"></div>
<div class="a" style="left:1257px;top:291px;width:21px;height:1px;background:#c5c2b2"></div>
<div class="a" style="left:1257px;top:292px;width:21px;height:1px;background:#fff"></div>
<div class="a" style="left:1257px;top:458px;width:21px;height:1px;background:#c5c2b2"></div>
<div class="a" style="left:1257px;top:459px;width:21px;height:1px;background:#fff"></div>
<div class="a" style="left:1257px;top:531px;width:21px;height:1px;background:#c5c2b2"></div>
<div class="a" style="left:1257px;top:532px;width:21px;height:1px;background:#fff"></div>
<svg class="a" style="left:1233px;top:88px" width="16" height="16" viewBox="0 0 16 16"><path d="M2 15 H15" stroke="#000"/><path d="M15 1 L7 9 L10 12 L16 5 Z" fill="#e8c030" stroke="#806020" stroke-width="0.6"/><path d="M7 9 L3 13 Q4 16 6 15 L10 12 Z" fill="#e87070" stroke="#804040" stroke-width="0.6"/></svg>
<svg class="a" style="left:1233px;top:110px" width="16" height="16" viewBox="0 0 16 16"><circle cx="4" cy="4" r="3.2" fill="#dfeaf8" stroke="#203060" stroke-width="1.3"/><circle cx="9" cy="11" r="3.2" fill="#dfeaf8" stroke="#203060" stroke-width="1.3"/><circle cx="11" cy="12" r="3.2" fill="#dfeaf8" stroke="#203060" stroke-width="1.3"/><path d="M7 3 Q12 1 13 6 L15 5 L13 8 L11 6" stroke="#2a50a0" stroke-width="1.3" fill="#2a50a0"/></svg>
<svg class="a" style="left:1233px;top:132px" width="16" height="16" viewBox="0 0 16 16"><path d="M7.5 0 V16" stroke="#2a5aa0" stroke-width="1.5"/><path d="M6 3 L1 14 H6 Z" fill="#fff" stroke="#000" stroke-width="1.2"/><path d="M9 3 L14 14 H9 Z" fill="#dfeaf8" stroke="#000" stroke-width="1.2"/></svg>
<svg class="a" style="left:1233px;top:154px" width="16" height="16" viewBox="0 0 16 16"><path d="M1.5 14.5 H14.5 V10 H7 Q8 4 4 4 Q1.5 4 1.5 8 Z" fill="#dfeaf8" stroke="#203060" stroke-width="1.2"/><path d="M4 12 H12 M5 12 Q5 7 4 7" stroke="#203060" fill="none"/></svg>
<svg class="a" style="left:1233px;top:176px" width="16" height="16" viewBox="0 0 16 16"><g fill="#fff" stroke="#203060" stroke-width="1.3"><rect x="1.5" y="1.5" width="5" height="5"/><rect x="9.5" y="1.5" width="5" height="5"/><rect x="1.5" y="9.5" width="5" height="5"/><rect x="9.5" y="9.5" width="5" height="5"/></g></svg>
<svg class="a" style="left:1233px;top:198px" width="16" height="16" viewBox="0 0 16 16"><path d="M8 0 L11 4 H9 V7 H12 V5 L16 8 L12 11 V9 H9 V12 H11 L8 16 L5 12 H7 V9 H4 V11 L0 8 L4 5 V7 H7 V4 H5 Z" fill="#2a5aa0"/></svg>
<svg class="a" style="left:1233px;top:220px" width="16" height="16" viewBox="0 0 16 16"><path d="M10 2.5 A6 6 0 1 1 4 4" fill="none" stroke="#2a5aa0" stroke-width="2.5"/><path d="M1 1 L7 2 L3 7 Z" fill="#2a5aa0"/></svg>
<svg class="a" style="left:1233px;top:242px" width="16" height="16" viewBox="0 0 16 16"><rect x="1.5" y="1.5" width="13" height="13" fill="#e8f0fa" stroke="#203060" stroke-width="1.3"/><rect x="1.5" y="7.5" width="7" height="7" fill="#fff" stroke="#203060" stroke-dasharray="1.2 1.2"/></svg>
<svg class="a" style="left:1233px;top:264px" width="16" height="16" viewBox="0 0 16 16"><path d="M6 1.5 H9 L15 14.5 H6 Z" fill="#c8daf0" stroke="#203060" stroke-width="1.2"/><path d="M1.5 1.5 H6 V14.5 H1.5 Z" fill="#fff" stroke="#000" stroke-width="1.2"/><path d="M6 2 V14" stroke="#fff" stroke-width="1.2" stroke-dasharray="1 1.5"/></svg>
<svg class="a" style="left:1233px;top:286px" width="16" height="16" viewBox="0 0 16 16"><path d="M1 8 H6" stroke="#2a5aa0" stroke-width="1.5"/><path d="M9 8 H16" stroke="#2a5aa0" stroke-width="1.2" stroke-dasharray="2 1.5"/><path d="M4 14 L10 2" stroke="#2a5aa0" stroke-width="1.5"/></svg>
<svg class="a" style="left:1233px;top:308px" width="16" height="16" viewBox="0 0 16 16"><path d="M1 9 H10" stroke="#2a5aa0" stroke-width="1.2" stroke-dasharray="2 1.5"/><path d="M9 14 L15 3" stroke="#2a5aa0" stroke-width="1.5"/></svg>
<svg class="a" style="left:1233px;top:330px" width="16" height="16" viewBox="0 0 16 16"><path d="M2 14 L14 2" stroke="#1a3070" stroke-width="1.5"/><rect x="1" y="12" width="3" height="3" fill="#2a5aa0"/><rect x="12" y="1" width="3" height="3" fill="#2a5aa0"/><path d="M7 7 L9 9" stroke="#fff" stroke-width="1"/></svg>
<svg class="a" style="left:1233px;top:352px" width="16" height="16" viewBox="0 0 16 16"><rect x="1.5" y="4.5" width="13" height="10" fill="#e8f0fa" stroke="#000" stroke-width="1.2"/><rect x="6" y="2" width="4" height="4" fill="#2a5aa0"/></svg>
<svg class="a" style="left:1233px;top:374px" width="16" height="16" viewBox="0 0 16 16"><path d="M0 8 H16" stroke="#1a3070" stroke-width="1.5"/><path d="M2 4 L7.5 8 L2 12 Z M14 4 L8.5 8 L14 12 Z" fill="#1a3070"/></svg>
<svg class="a" style="left:1233px;top:396px" width="16" height="16" viewBox="0 0 16 16"><path d="M2 16 V8 L8 2 H16" stroke="#1a3070" stroke-width="1.5" fill="none"/><path d="M2 8 V2 H8" stroke="#1a3070" stroke-dasharray="1 1.5" fill="none"/></svg>
<svg class="a" style="left:1233px;top:418px" width="16" height="16" viewBox="0 0 16 16"><path d="M2 16 V10 Q2 2 10 2 H16" stroke="#2a5aa0" stroke-width="1.8" fill="none"/><path d="M2 8 V2 H8" stroke="#1a3070" stroke-dasharray="1 1.5" fill="none"/><path d="M2 10 V16" stroke="#000" stroke-width="1.5"/></svg>
<svg class="a" style="left:1233px;top:440px" width="16" height="16" viewBox="0 0 16 16"><path d="M3 15 L11 6 L14 9 L6 16 Z" fill="#e03020"/><circle cx="4" cy="5" r="1.5" fill="#f0c020"/><circle cx="9" cy="12" r="1.5" fill="#f0c020"/><path d="M11 6 L14 2 L16 4 L14 9" fill="#dfeaf8" stroke="#8090a0" stroke-width="0.6"/></svg>
<svg class="a" style="left:1233px;top:480px" width="16" height="16" viewBox="0 0 16 16"><rect x="1.5" y="1.5" width="8" height="8" fill="#dfeaf8" stroke="#5a7eb0"/><rect x="4.5" y="4.5" width="8" height="8" fill="#5080c0" stroke="#2a4a88"/><rect x="7.5" y="9.5" width="7" height="6" fill="#dfeaf8" stroke="#5a7eb0"/></svg>
<svg class="a" style="left:1233px;top:502px" width="16" height="16" viewBox="0 0 16 16"><rect x="1.5" y="1.5" width="8" height="8" fill="#dfeaf8" stroke="#5a7eb0"/><rect x="4.5" y="4.5" width="8" height="8" fill="#5080c0" stroke="#2a4a88"/><rect x="7.5" y="9.5" width="7" height="6" fill="#dfeaf8" stroke="#5a7eb0"/></svg>
<svg class="a" style="left:1233px;top:524px" width="16" height="16" viewBox="0 0 16 16"><rect x="1.5" y="1.5" width="11" height="9" fill="#5080c0" stroke="#2a4a88"/><rect x="5.5" y="7.5" width="9" height="7" fill="#dfeaf8" stroke="#5a7eb0"/></svg>
<svg class="a" style="left:1233px;top:546px" width="16" height="16" viewBox="0 0 16 16"><rect x="1.5" y="1.5" width="11" height="9" fill="#dfeaf8" stroke="#5a7eb0"/><rect x="5.5" y="7.5" width="9" height="7" fill="#5080c0" stroke="#2a4a88"/></svg>
<svg class="a" style="left:1233px;top:586px" width="16" height="16" viewBox="0 0 16 16"><circle cx="8" cy="8" r="5" fill="#f0d8f8" stroke="#7010c0" stroke-width="1.8"/><path d="M2 14 L14 2" stroke="#e02040" stroke-width="0.9"/></svg>
<svg class="a" style="left:1233px;top:608px" width="16" height="16" viewBox="0 0 16 16"><path d="M2 7 H14 M2 3 V12 M14 3 V12" stroke="#7010c0" stroke-width="1.6"/></svg>
<svg class="a" style="left:1259px;top:88px" width="16" height="16" viewBox="0 0 16 16"><path d="M1.5 1 V15 M14.5 1 V15 M2 5 H14" stroke="#000" stroke-width="1.6"/><path d="M2 5 L5 3 V7 Z M14 5 L11 3 V7 Z" fill="#000"/></svg>
<svg class="a" style="left:1259px;top:109px" width="16" height="16" viewBox="0 0 16 16"><path d="M1 5 L5 1 M11 15 L15 11 M3 3 L13 13" stroke="#000" stroke-width="1.6"/></svg>
<svg class="a" style="left:1259px;top:131px" width="16" height="16" viewBox="0 0 16 16"><path d="M3 15 Q3 5 13 3" stroke="#000" stroke-width="1.3" fill="none"/><path d="M6 14 Q6 8 12 7" stroke="#000" stroke-width="1.3" fill="none"/><rect x="1" y="13" width="3" height="3" fill="#1a4a90"/><rect x="12" y="1" width="3" height="3" fill="#1a4a90"/></svg>
<svg class="a" style="left:1259px;top:153px" width="16" height="16" viewBox="0 0 16 16"><path d="M3 5 V15 H14 M8 9 L12 14 M12 9 L12 14" stroke="#000" fill="none"/><text x="0" y="7" font-size="5" font-family="Liberation Sans">Y</text><text x="11" y="6" font-size="5" font-family="Liberation Sans">X</text></svg>
<svg class="a" style="left:1259px;top:181px" width="16" height="16" viewBox="0 0 16 16"><path d="M2 15 L5 1 M11 15 L14 1 M4 7 H12" stroke="#000" stroke-width="1.4"/><path d="M4 7 L6 5.5 V8.5 Z M12 7 L10 5.5 V8.5 Z" fill="#000"/></svg>
<svg class="a" style="left:1259px;top:204px" width="16" height="16" viewBox="0 0 16 16"><circle cx="8" cy="8" r="6.5" fill="none" stroke="#505050" stroke-width="1.2"/><path d="M4 4 L9 9" stroke="#000" stroke-width="1.5"/><path d="M3.5 3.5 L7.5 4.5 L4.5 7.5 Z" fill="#000"/></svg>
<svg class="a" style="left:1259px;top:225px" width="16" height="16" viewBox="0 0 16 16"><path d="M3 12 A7 7 0 0 1 13 2" fill="none" stroke="#404040" stroke-width="1.2"/><path d="M5 14 L10 9 L8 8 L13 3" stroke="#000" stroke-width="1.5" fill="none"/></svg>
<svg class="a" style="left:1259px;top:247px" width="16" height="16" viewBox="0 0 16 16"><circle cx="8" cy="8" r="6.5" fill="none" stroke="#505050" stroke-width="1.2"/><path d="M4 4 L12 12" stroke="#000" stroke-width="1.5"/><path d="M3.5 3.5 L7.5 4.5 L4.5 7.5 Z M12.5 12.5 L8.5 11.5 L11.5 8.5 Z" fill="#000"/></svg>
<svg class="a" style="left:1259px;top:269px" width="16" height="16" viewBox="0 0 16 16"><path d="M1 15 H15 M1 15 L10 3 M6 8 A7 7 0 0 1 10 14" stroke="#000" stroke-width="1.3" fill="none"/></svg>
<svg class="a" style="left:1259px;top:294px" width="16" height="16" viewBox="0 0 16 16"><path d="M1.5 1 V15 M14.5 1 V15 M2 4 H14" stroke="#000" stroke-width="1.4"/><path d="M5 2 L12 9 L9 9 L14 15 L6 10 L9 10 Z" fill="#f0d020" stroke="#605010" stroke-width="0.7"/></svg>
<svg class="a" style="left:1259px;top:317px" width="16" height="16" viewBox="0 0 16 16"><path d="M1.5 1 V15 M14.5 1 V15 M2 4 H14 M2 9 H9 M8.5 1 V11" stroke="#000" stroke-width="1.4"/></svg>
<svg class="a" style="left:1259px;top:339px" width="16" height="16" viewBox="0 0 16 16"><path d="M2 15 L5 1 M11 15 L14 1 M4 6 H12" stroke="#000" stroke-width="1.4"/></svg>
<svg class="a" style="left:1259px;top:367px" width="16" height="16" viewBox="0 0 16 16"><circle cx="8" cy="8" r="6.5" fill="#fff" stroke="#404040" stroke-width="1.5"/><circle cx="8" cy="8" r="4" fill="none" stroke="#404040" stroke-width="1.5"/></svg>
<svg class="a" style="left:1259px;top:390px" width="16" height="16" viewBox="0 0 16 16"><path d="M2 15 L8 6" stroke="#000" stroke-width="1.3"/><path d="M4 5 L9 1 L13 11 L9 11 Z" fill="#f0d020" stroke="#605010"/><text x="10" y="5" font-size="6" fill="#1a3070" font-family="Liberation Sans" font-weight="bold">A</text></svg>
<svg class="a" style="left:1259px;top:414px" width="16" height="16" viewBox="0 0 16 16"><rect x="1.5" y="3.5" width="13" height="9" fill="#b8d0ec" stroke="#1a3070"/><text x="3" y="11" font-size="7" font-family="Liberation Sans" fill="#1a3070">⊕.1</text></svg>
<svg class="a" style="left:1259px;top:436px" width="16" height="16" viewBox="0 0 16 16"><circle cx="8" cy="8" r="6.5" fill="#fff" stroke="#404040" stroke-width="1.2"/><path d="M5 8 H11 M8 5 V11" stroke="#000" stroke-width="1.6"/></svg>
<svg class="a" style="left:1259px;top:462px" width="16" height="16" viewBox="0 0 16 16"><text x="8" y="9" font-size="10" font-weight="bold" font-family="Liberation Sans" fill="#1a3a80" text-anchor="middle">A</text><path d="M1.5 8 V16 M14.5 8 V16 M2 12 H14" stroke="#000" stroke-width="1.6"/></svg>
<svg class="a" style="left:1259px;top:485px" width="16" height="16" viewBox="0 0 16 16"><path d="M13 1 L5 11" stroke="#e0a020" stroke-width="2.5"/><path d="M1.5 8 V16 M14.5 8 V16 M2 12 H14" stroke="#000" stroke-width="1.6"/></svg>
<svg class="a" style="left:1259px;top:507px" width="16" height="16" viewBox="0 0 16 16"><path d="M1.5 1 V16 M14.5 1 V16 M2 4 H14 M2 11 H14" stroke="#1a3070" stroke-width="1.5"/><path d="M2 4 H14" stroke="#6080b0" stroke-width="1.5"/></svg>
<svg class="a" style="left:1259px;top:533px" width="16" height="16" viewBox="0 0 16 16"><path d="M1 13 L14 2 M15 1 L6 10" stroke="#503020" stroke-width="1.5"/><path d="M1.5 10 V16 M14.5 10 V16 M2 13 H14" stroke="#000" stroke-width="1.6"/></svg>
<svg class="a" style="left:1259px;top:556px" width="16" height="16" viewBox="0 0 16 16"><path d="M2 15 L8 6" stroke="#000" stroke-width="1.3"/><path d="M4 5 L9 1 L13 11 L9 11 Z" fill="#f0d020" stroke="#605010"/><text x="10" y="5" font-size="6" fill="#1a3070" font-family="Liberation Sans" font-weight="bold">A</text></svg>
<svg class="a" style="left:1259px;top:580px" width="16" height="16" viewBox="0 0 16 16"><path d="M2 7 L6 4 L10 5 L10 10 L3 11 Z" fill="#505050"/><circle cx="8" cy="8" r="2" fill="#fff"/><path d="M12 2 Q16 8 11 14" stroke="#404040" fill="none" stroke-width="1.2"/></svg>
<div class="a" style="left:27px;top:638px;width:1182px;height:14px;background:#ece9d8"></div>
<div class="a" style="left:28px;top:638px;width:18px;height:13px;background:#ece9d8;border:1px solid #fff;border-right-color:#aca899;border-bottom-color:#aca899"></div>
<div class="a" style="left:46px;top:638px;width:18px;height:13px;background:#ece9d8;border:1px solid #fff;border-right-color:#aca899;border-bottom-color:#aca899"></div>
<div class="a" style="left:64px;top:638px;width:18px;height:13px;background:#ece9d8;border:1px solid #fff;border-right-color:#aca899;border-bottom-color:#aca899"></div>
<div class="a" style="left:82px;top:638px;width:18px;height:13px;background:#ece9d8;border:1px solid #fff;border-right-color:#aca899;border-bottom-color:#aca899"></div>
<svg class="a" style="left:31px;top:640px" width="12" height="11" viewBox="0 0 12 11"><path d="M2.5 1 V10 M9 1 L4 5.5 L9 10 Z" stroke="#000" fill="#000"/></svg>
<svg class="a" style="left:50px;top:640px" width="12" height="11" viewBox="0 0 12 11"><path d="M8 1 L3 5.5 L8 10 Z" fill="#000"/></svg>
<svg class="a" style="left:68px;top:640px" width="12" height="11" viewBox="0 0 12 11"><path d="M4 1 L9 5.5 L4 10 Z" fill="#000"/></svg>
<svg class="a" style="left:86px;top:640px" width="12" height="11" viewBox="0 0 12 11"><path d="M3 1 L8 5.5 L3 10 Z M9.5 1 V10" stroke="#000" fill="#000"/></svg>
<svg class="a" style="left:100px;top:637px" width="130" height="16"><path d="M4 0 L8 14 H36 L40 0 Z" fill="#000" stroke="#404040"/><path d="M40 1 L44 14 H79 L83 1" fill="#ece9d8" stroke="#716f64"/><path d="M83 1 L87 14 H122 L126 1" fill="#ece9d8" stroke="#716f64"/><path d="M40 0.5 H126" stroke="#716f64"/></svg>
<div class="a t" style="left:110px;top:637px;color:#fff;font-size:12px">模型</div>
<div class="a t" style="left:147px;top:637px;font-size:12px">布局1</div>
<div class="a t" style="left:190px;top:637px;font-size:12px">布局2</div>
<div class="a" style="left:807px;top:638px;width:402px;height:13px;background:linear-gradient(#f3f1ec,#fefefe 40%,#f8f8f6)"></div>
<div class="a" style="left:809px;top:638px;width:3px;height:13px;border:1px solid #c8c6b8;background:#f4f3ee"></div>
<div class="a" style="left:813px;top:638px;width:16px;height:13px;background:linear-gradient(135deg,#dbe6fe,#b9cef8);border:1px solid #cbdaf9;border-radius:2px;box-shadow:inset -1px -1px 0 #a8bdee"></div>
<svg class="a" style="left:816px;top:640px" width="9" height="9" viewBox="0 0 9 9"><path d="M6 1 L2.5 4.5 L6 8" stroke="#4d6185" stroke-width="2" fill="none"/></svg>
<div class="a" style="left:1192px;top:638px;width:16px;height:13px;background:linear-gradient(135deg,#dbe6fe,#b9cef8);border:1px solid #cbdaf9;border-radius:2px;box-shadow:inset -1px -1px 0 #a8bdee"></div>
<svg class="a" style="left:1195px;top:640px" width="9" height="9" viewBox="0 0 9 9"><path d="M3 1 L6.5 4.5 L3 8" stroke="#4d6185" stroke-width="2" fill="none"/></svg>
<div class="a" style="left:834px;top:638px;width:17px;height:13px;background:linear-gradient(#cad8fa,#b8cdf8);border:1px solid #a9bef5;border-radius:2px"></div>
<svg class="a" style="left:838px;top:640px" width="9" height="10" viewBox="0 0 9 10"><path d="M1.5 1 V9 M3.5 1 V9 M5.5 1 V9 M7.5 1 V9" stroke="#8aa3e0"/></svg>
<div class="a" style="left:1209px;top:638px;width:17px;height:14px;background:#ece9d8"></div>
<div class="a" style="left:0px;top:652px;width:1280px;height:7px;background:linear-gradient(#ece9d8,#f8f7f2 2px,#f4f3ec 4px,#ece9d8)"></div>
<div class="a" style="left:0px;top:659px;width:1280px;height:1px;background:#303030"></div>
<div class="a" style="left:0px;top:660px;width:1280px;height:1px;background:#fff"></div>
<div class="a" style="left:6px;top:668px;width:3px;height:40px;border-left:1px solid #fff;background:#c5c2b2"></div>
<div class="a" style="left:10px;top:668px;width:3px;height:40px;border-left:1px solid #fff;background:#c5c2b2"></div>
<div class="a" style="left:16px;top:665px;width:1257px;height:48px;background:#fff;border-top:2px solid #303030;border-left:2px solid #303030"></div>
<div class="a" style="left:17px;top:696px;width:1240px;height:1px;background:#8a8a8a"></div>
<div class="a" style="left:16px;top:713px;width:1257px;height:1px;background:#fff"></div>
<div class="a t" style="left:19px;top:666px;font-family:'Liberation Mono',monospace;font-size:13px;line-height:15px">AutoCAD <span style="display:inline-block;width:15.60px;text-align:center">菜</span><span style="display:inline-block;width:15.60px;text-align:center">单</span><span style="display:inline-block;width:15.60px;text-align:center">实</span><span style="display:inline-block;width:15.60px;text-align:center">用</span><span style="display:inline-block;width:15.60px;text-align:center">程</span><span style="display:inline-block;width:15.60px;text-align:center">序</span><span style="display:inline-block;width:15.60px;text-align:center">已</span><span style="display:inline-block;width:15.60px;text-align:center">加</span><span style="display:inline-block;width:15.60px;text-align:center">载</span><span style="display:inline-block;width:15.60px;text-align:center">。</span></div>
<div class="a t" style="left:19px;top:679px;font-family:'Liberation Mono',monospace;font-size:13px;line-height:15px"><span style="display:inline-block;width:15.60px;text-align:center">命</span><span style="display:inline-block;width:15.60px;text-align:center">令</span>: COMMANDLINE</div>
<div class="a t" style="left:19px;top:698px;font-family:'Liberation Mono',monospace;font-size:13px;line-height:15px"><span style="display:inline-block;width:15.60px;text-align:center">命</span><span style="display:inline-block;width:15.60px;text-align:center">令</span>:</div>
<div class="a" style="left:1257px;top:667px;width:14px;height:14px;background:linear-gradient(135deg,#dbe6fe,#b9cef8);border:1px solid #cbdaf9;border-radius:2px;box-shadow:inset -1px -1px 0 #a8bdee"></div>
<svg class="a" style="left:1259px;top:669px" width="9" height="9" viewBox="0 0 9 9"><path d="M1 6 L4.5 2.5 L8 6" stroke="#4d6185" stroke-width="2" fill="none"/></svg>
<div class="a" style="left:1257px;top:682px;width:14px;height:14px;background:linear-gradient(135deg,#dbe6fe,#b9cef8);border:1px solid #cbdaf9;border-radius:2px;box-shadow:inset -1px -1px 0 #a8bdee"></div>
<svg class="a" style="left:1259px;top:684px" width="9" height="9" viewBox="0 0 9 9"><path d="M1 3 L4.5 6.5 L8 3" stroke="#4d6185" stroke-width="2" fill="none"/></svg>
<div class="a" style="left:0px;top:715px;width:1280px;height:22px;background:#ece9d8"></div>
<div class="a" style="left:4px;top:719px;width:252px;height:17px;border:1px solid #aca899;border-right-color:#fff;border-bottom-color:#fff"></div>
<div class="a t" style="left:7px;top:722px;font-family:'Liberation Mono',monospace;font-size:10px;color:#101010">296.2677, 907.2579 , 0.0000</div>
<div class="a" style="left:260px;top:719px;width:28px;height:18px;border:1px solid #fff;border-right-color:#aca899;border-bottom-color:#aca899"></div>
<div class="a t" style="left:260px;top:722px;width:28px;text-align:center;font-size:12px">捕捉</div>
<div class="a" style="left:291px;top:719px;width:28px;height:18px;border:1px solid #fff;border-right-color:#aca899;border-bottom-color:#aca899"></div>
<div class="a t" style="left:291px;top:722px;width:28px;text-align:center;font-size:12px">栅格</div>
<div class="a" style="left:322px;top:719px;width:29px;height:18px;border:1px solid #fff;border-right-color:#aca899;border-bottom-color:#aca899"></div>
<div class="a t" style="left:322px;top:722px;width:29px;text-align:center;font-size:12px">正交</div>
<div class="a" style="left:355px;top:719px;width:29px;height:18px;border:1px solid #404040;border-left-width:2px;border-top-width:2px;border-right-color:#fff;border-bottom-color:#fff;background:#f4f3ee"></div>
<div class="a t" style="left:355px;top:722px;width:29px;text-align:center;font-size:12px">极轴</div>
<div class="a" style="left:387px;top:719px;width:54px;height:18px;border:1px solid #404040;border-left-width:2px;border-top-width:2px;border-right-color:#fff;border-bottom-color:#fff;background:#f4f3ee"></div>
<div class="a t" style="left:387px;top:722px;width:54px;text-align:center;font-size:12px">对象捕捉</div>
<div class="a" style="left:443px;top:719px;width:53px;height:18px;border:1px solid #404040;border-left-width:2px;border-top-width:2px;border-right-color:#fff;border-bottom-color:#fff;background:#f4f3ee"></div>
<div class="a t" style="left:443px;top:722px;width:53px;text-align:center;font-size:12px">对象追踪</div>
<div class="a" style="left:498px;top:719px;width:23px;height:18px;border:1px solid #fff;border-right-color:#aca899;border-bottom-color:#aca899"></div>
<div class="a t" style="left:498px;top:722px;width:23px;text-align:center;font-size:12px;font-family:'Liberation Mono',monospace;font-size:11px;letter-spacing:-0.5px">DYN</div>
<div class="a" style="left:523px;top:719px;width:30px;height:18px;border:1px solid #fff;border-right-color:#aca899;border-bottom-color:#aca899"></div>
<div class="a t" style="left:523px;top:722px;width:30px;text-align:center;font-size:12px">线宽</div>
<div class="a" style="left:556px;top:719px;width:30px;height:18px;border:1px solid #404040;border-left-width:2px;border-top-width:2px;border-right-color:#fff;border-bottom-color:#fff;background:#f4f3ee"></div>
<div class="a t" style="left:556px;top:722px;width:30px;text-align:center;font-size:12px">模型</div>
<svg class="a" style="left:1185px;top:698px" width="98" height="42"><defs><linearGradient id="gg" x1="0" y1="0" x2="0" y2="1"><stop offset="0" stop-color="#fff"/><stop offset=".5" stop-color="#f8f8f8"/><stop offset=".5" stop-color="#a8e088"/><stop offset="1" stop-color="#78c858"/></linearGradient></defs><path d="M22 1 H82 Q97 1 97 21 Q97 41 82 41 H22 Z" fill="#f6f6f4" stroke="#d8d8d8"/><circle cx="21" cy="21" r="19" fill="#fff" stroke="#d8d8d8"/><circle cx="21" cy="21" r="15.5" fill="url(#gg)" stroke="#40a040" stroke-width="2.5"/><text x="21" y="25" text-anchor="middle" font-family="Liberation Sans" font-size="10" fill="#203010">51%</text><path d="M45 17 V11 M42.5 13.5 L45 10 L47.5 13.5" stroke="#f07020" stroke-width="2" fill="none"/><path d="M45 25 V31 M42.5 28.5 L45 32 L47.5 28.5" stroke="#208020" stroke-width="2" fill="none"/><text x="84" y="18" text-anchor="end" font-family="Liberation Sans" font-size="10" fill="#000" textLength="20">0K/S</text><text x="84" y="34" textLength="20" text-anchor="end" font-family="Liberation Sans" font-size="10" fill="#000">0K/S</text></svg>
<div class="a" style="left:0px;top:738px;width:1280px;height:30px;background:linear-gradient(#3168d5 0,#4a8af0 1px,#3a7ae8 2px,#2a62dc 4px,#245edc 26px,#1c4cc0 30px)"></div>
<div class="a" style="left:0px;top:738px;width:97px;height:30px;border-radius:0 11px 11px 0;background:linear-gradient(#3c9a3c 0,#5ec85e 2px,#3a9e3a 6px,#389a38 24px,#2e7e2e 31px);box-shadow:inset -2px 0 3px #1a5a1a"></div>
<svg class="a" style="left:9px;top:742px" width="20" height="20" viewBox="0 0 20 20"><path d="M2 4 Q5 2 9 4 L8 10 Q5 8 1 10 Z" fill="#f05020"/><path d="M10 4 Q14 6 18 4 L17 10 Q13 12 9 10 Z" fill="#40b030"/><path d="M1 11 Q5 9 8 11 L7 17 Q4 15 0 17 Z" fill="#3080f0"/><path d="M9 11 Q13 13 17 11 L16 17 Q12 19 8 17 Z" fill="#f8c020"/></svg>
<div class="a t" style="left:36px;top:739px;color:#fff;font-size:20px;font-style:italic;text-shadow:1px 1px 1px #1a4a1a;line-height:26px">开始</div>
<div class="a" style="left:100px;top:737px;width:1px;height:31px;background:#1a48b8"></div>
<div class="a" style="left:101px;top:741px;width:41px;height:23px;border:1px solid #5a8ef0;border-radius:2px;background:#2a5ee0"></div>
<svg class="a" style="left:112px;top:744px" width="19" height="19" viewBox="0 0 19 19"><circle cx="6" cy="6" r="4.5" fill="#8ac830"/><circle cx="13" cy="6" r="4.5" fill="#60a8f0"/><circle cx="6" cy="13" r="4.5" fill="#f0c830"/><circle cx="13" cy="13" r="4.5" fill="#e05040"/></svg>
<svg class="a" style="left:147px;top:743px" width="18" height="18" viewBox="0 0 18 18"><ellipse cx="9" cy="9" rx="8.5" ry="4" fill="none" stroke="#50a0f0" stroke-width="1.2" transform="rotate(-35 9 9)"/><text x="9" y="15" text-anchor="middle" font-family="Liberation Sans" font-weight="bold" font-size="17" fill="#3aa0f0">e</text></svg>
<svg class="a" style="left:171px;top:743px" width="17" height="18" viewBox="0 0 17 18"><path d="M2 3 L13 1 L15 14 L3 16 Z" fill="#fff" stroke="#2a4aa0"/><path d="M5 6 Q9 3 11 8 Q8 12 6 10" fill="none" stroke="#2a60c0" stroke-width="2"/><circle cx="15" cy="7" r="1.5" fill="#f04020"/></svg>
<svg class="a" style="left:194px;top:743px" width="16" height="17" viewBox="0 0 16 17"><rect x="0.5" y="0.5" width="15" height="16" fill="#f8f0f0" stroke="#e0a0a0"/><rect x="3.5" y="3.5" width="9" height="9" fill="#fff" stroke="#404848" stroke-width="1.3"/><rect x="6" y="4" width="6" height="5" fill="#a0a8a8"/></svg>
<div class="a t" style="left:221px;top:740px;color:#fff;font-size:12px">»</div>
<div class="a" style="left:238px;top:741px;width:117px;height:24px;background:linear-gradient(#4a8cf5,#3a7af0 10%,#3474ee 85%,#2a64d8);border-radius:3px;box-shadow:inset -1px -1px 1px #1a48b8, inset 1px 1px 1px #6aa4f8"></div>
<svg class="a" style="left:248px;top:746px" width="16" height="17" viewBox="0 0 16 17"><rect x="2" y="1" width="12" height="15" fill="#fff" stroke="#8090a0"/><text x="8" y="14" text-anchor="middle" font-family="Liberation Serif" font-style="italic" font-weight="bold" font-size="15" fill="#2a70d8">e</text></svg>
<div class="a t" style="left:266px;top:748px;color:#fff;font-size:10px;font-family:'Liberation Mono',monospace">CaTICs <span style="display:inline-block;width:12.00px;text-align:center">网</span>...</div>
<div class="a" style="left:358px;top:741px;width:117px;height:24px;background:#1e4fc0;border-radius:3px;box-shadow:inset 1px 1px 2px #0a2a80"></div>
<svg class="a" style="left:368px;top:746px" width="17" height="17" viewBox="0 0 17 17"><rect x="0.5" y="0.5" width="16" height="16" fill="#2a9a82" stroke="#e8fff8"/><path d="M2.5 10 L6 1.5 L9 10 M12 1 V16 M1 10.5 H16" stroke="#e8fff8" stroke-width="1" fill="none"/><rect x="10" y="9" width="4" height="4" fill="#2a9a82" stroke="#e8fff8"/></svg>
<div class="a t" style="left:386px;top:748px;color:#fff;font-size:10px;font-family:'Liberation Mono',monospace">AutoCAD 2...</div>
<div class="a" style="left:478px;top:741px;width:117px;height:24px;background:linear-gradient(#4a8cf5,#3a7af0 10%,#3474ee 85%,#2a64d8);border-radius:3px;box-shadow:inset -1px -1px 1px #1a48b8, inset 1px 1px 1px #6aa4f8"></div>
<svg class="a" style="left:488px;top:746px" width="16" height="17" viewBox="0 0 16 17"><rect x="2" y="1" width="12" height="15" fill="#fff" stroke="#8090a0"/><text x="8" y="14" text-anchor="middle" font-family="Liberation Serif" font-style="italic" font-weight="bold" font-size="15" fill="#2a70d8">e</text></svg>
<div class="a t" style="left:506px;top:748px;color:#fff;font-size:10px;font-family:'Liberation Mono',monospace">CaTICs <span style="display:inline-block;width:12.00px;text-align:center">网</span>...</div>
<div class="a" style="left:598px;top:741px;width:117px;height:24px;background:linear-gradient(#4a8cf5,#3a7af0 10%,#3474ee 85%,#2a64d8);border-radius:3px;box-shadow:inset -1px -1px 1px #1a48b8, inset 1px 1px 1px #6aa4f8"></div>
<svg class="a" style="left:608px;top:746px" width="16" height="17" viewBox="0 0 16 17"><rect x="2" y="1" width="13" height="15" fill="#fff" stroke="#6070a0"/><rect x="1" y="3" width="9" height="9" fill="#2a4aa8"/><text x="5.5" y="11" text-anchor="middle" font-family="Liberation Sans" font-weight="bold" font-size="8" fill="#fff">W</text></svg>
<div class="a t" style="left:626px;top:748px;color:#fff;font-size:10px;font-family:'Liberation Mono',monospace">Catics<span style="display:inline-block;width:12.00px;text-align:center">竞</span>...</div>
<div class="a" style="left:718px;top:741px;width:117px;height:24px;background:linear-gradient(#4a8cf5,#3a7af0 10%,#3474ee 85%,#2a64d8);border-radius:3px;box-shadow:inset -1px -1px 1px #1a48b8, inset 1px 1px 1px #6aa4f8"></div>
<svg class="a" style="left:728px;top:746px" width="16" height="17" viewBox="0 0 16 17"><rect x="2" y="2" width="12" height="14" fill="#f8c040" stroke="#b07010"/><circle cx="4" cy="4" r="2.5" fill="#e03020"/></svg>
<div class="a t" style="left:746px;top:748px;color:#fff;font-size:10px;font-family:'Liberation Mono',monospace"><span style="display:inline-block;width:12.00px;text-align:center">菁</span><span style="display:inline-block;width:12.00px;text-align:center">华</span><span style="display:inline-block;width:12.00px;text-align:center">锐</span><span style="display:inline-block;width:12.00px;text-align:center">航</span>...</div>
<div class="a" style="left:838px;top:741px;width:117px;height:24px;background:linear-gradient(#4a8cf5,#3a7af0 10%,#3474ee 85%,#2a64d8);border-radius:3px;box-shadow:inset -1px -1px 1px #1a48b8, inset 1px 1px 1px #6aa4f8"></div>
<svg class="a" style="left:848px;top:746px" width="16" height="17" viewBox="0 0 16 17"><rect x="2" y="1" width="12" height="15" fill="#fff" stroke="#8090a0"/><text x="8" y="14" text-anchor="middle" font-family="Liberation Serif" font-style="italic" font-weight="bold" font-size="15" fill="#2a70d8">e</text></svg>
<div class="a t" style="left:866px;top:748px;color:#fff;font-size:10px;font-family:'Liberation Mono',monospace"># - Windo...</div>
<div class="a" style="left:958px;top:741px;width:117px;height:24px;background:linear-gradient(#4a8cf5,#3a7af0 10%,#3474ee 85%,#2a64d8);border-radius:3px;box-shadow:inset -1px -1px 1px #1a48b8, inset 1px 1px 1px #6aa4f8"></div>
<svg class="a" style="left:968px;top:746px" width="16" height="17" viewBox="0 0 16 17"><path d="M1 4 H6 L8 6 H15 V15 H1 Z" fill="#f8d060" stroke="#b08020"/></svg>
<div class="a t" style="left:986px;top:748px;color:#fff;font-size:10px;font-family:'Liberation Mono',monospace">catics</div>
<svg class="a" style="left:1085px;top:745px" width="20" height="18" viewBox="0 0 20 18"><rect x="1" y="5" width="18" height="10" fill="#fff" stroke="#304070"/><g fill="#304070"><rect x="3" y="7" width="14" height="1"/><rect x="3" y="10" width="14" height="1"/><rect x="5" y="12.5" width="10" height="1"/></g><path d="M5 3 H16" stroke="#c0d8ff"/></svg>
<div class="a" style="left:1113px;top:738px;width:167px;height:30px;background:linear-gradient(#1898ec 0,#2aa6f4 2px,#1290e8 5px,#0f8ae4 27px,#0a6ac8 31px);border-left:1px solid #0a5ac0;box-shadow:inset 1px 0 0 #4ab0f8"></div>
<svg class="a" style="left:1122px;top:743px" width="18" height="18" viewBox="0 0 18 18"><rect x="1" y="4" width="11" height="8" fill="#3a6ad0" stroke="#d0e0f8"/><rect x="3" y="13" width="7" height="3" fill="#e0e8f0"/><path d="M13 3 Q15 7 13 11 M15 1 Q18 7 15 13" stroke="#fff" fill="none"/></svg>
<svg class="a" style="left:1142px;top:743px" width="18" height="18" viewBox="0 0 18 18"><rect x="6" y="1" width="10" height="8" fill="#4a6ab0" stroke="#fff"/><rect x="1" y="6" width="10" height="8" fill="#4a6ab0" stroke="#fff"/><path d="M9 10 L16 17 M16 10 L9 17" stroke="#e02020" stroke-width="2.2"/></svg>
<svg class="a" style="left:1160px;top:743px" width="18" height="18" viewBox="0 0 18 18"><circle cx="8" cy="8" r="7" fill="#606060"/><circle cx="8" cy="8" r="4" fill="#a0a0a0"/><path d="M10 16 L16 10" stroke="#a0c0ff"/></svg>
<svg class="a" style="left:1178px;top:743px" width="16" height="18" viewBox="0 0 16 18"><path d="M8 1 L15 3 Q15 12 8 16 Q1 12 1 3 Z" fill="#40a040" stroke="#e0f0e0"/><path d="M9 4 L5 9 H8 L6 13 L11 7 H8 Z" fill="#fff"/></svg>
<svg class="a" style="left:1196px;top:743px" width="16" height="18" viewBox="0 0 16 18"><circle cx="8" cy="9" r="7.5" fill="#f0d020"/><path d="M8 4 V14 M3 9 H13" stroke="#206020" stroke-width="3"/></svg>
<svg class="a" style="left:1214px;top:742px" width="18" height="19" viewBox="0 0 18 19"><ellipse cx="8" cy="5" rx="4.5" ry="5" fill="#000"/><ellipse cx="8" cy="11" rx="5.5" ry="5" fill="#000"/><ellipse cx="8" cy="11" rx="3.5" ry="4" fill="#fff"/><path d="M4 8 H12 L8 10 Z" fill="#f0a020"/><circle cx="13" cy="14" r="4" fill="#f0a020"/></svg>
<div class="a t" style="left:1236px;top:744px;color:#fff;font-size:13px">10:20</div>
</body></html>
